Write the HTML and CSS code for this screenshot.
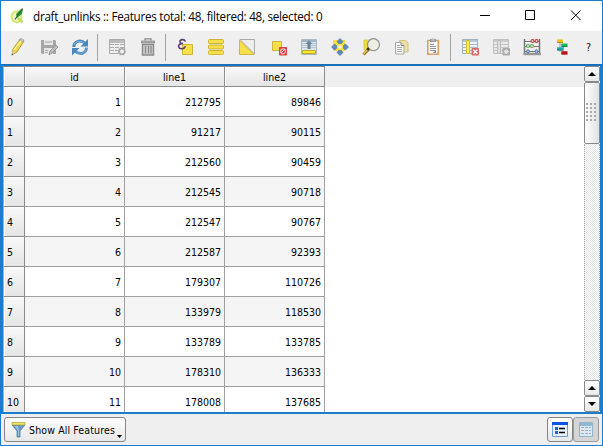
FILE: index.html
```html
<!DOCTYPE html>
<html lang="en">
<head>
<meta charset="utf-8">
<title>draft_unlinks :: Features total: 48, filtered: 48, selected: 0</title>
<link rel="stylesheet" href="styles.css">
</head>
<body>
<div class="window">
  <header class="titlebar">
    <svg class="logo" width="16" height="16" viewBox="0 0 16 16"><ellipse cx="6.500" cy="8.800" rx="5" ry="5.500" fill="#f0f5c4" stroke="#d3e578" stroke-width="2"/><path d="m8 10 4.500 4.500" stroke="#c3dc55" stroke-width="2.500"/><path d="m11 1-5 5 1 4 5-4 1-5z" fill="#3c9a3c"/><path d="m5 11.500 7.500-11" stroke="#1f6a35" stroke-width="1.200"/></svg>
    <h1 class="title">draft_unlinks :: Features total: 48, filtered: 48, selected: 0</h1>
    <svg class="controls" width="104" height="11" viewBox="0 0 104 11"><path d="M0 5.500h10M45.500.5h9v9h-9zM91 .5l9.500 9.500M100.500.5 91 10" fill="none" stroke="#000"/></svg>
  </header>

  <nav class="toolbar">
    <span class="tool"><svg viewBox="0 0 19 19"><path d="m3 17 1-6L11 1l4 2-7 11z" fill="#ead34e" stroke="#a88e2c" stroke-width=".8"/><path d="m10 2 4 2 1-2-3-1.500z" fill="#c7c7c7" stroke="#888" stroke-width=".5"/><path d="m5 12 7-9" stroke="#fff48e" stroke-width="1.300"/><path d="m3.300 13 2.500 1.500L3 17.500z" fill="#e6c9a0"/><path d="m3 15.500 1 .8-1.300 1.400z" fill="#333"/></svg></span>
    <span class="tool"><svg viewBox="0 0 19 19"><path d="M1 2h14l1 1v13H2l-1-1z" fill="#a6a6a6"/><path d="M4 2h9v5H4zM4 10h9v6H4z" fill="#e6e6e6"/><path d="M5 4h7M5 12.500h3M5 14.500h3" stroke="#aaa"/><path d="m9 17 1-4 6-6 2 2-6 6z" fill="#bebebe" stroke="#8c8c8c" stroke-width=".8"/></svg></span>
    <span class="tool"><svg viewBox="0 0 19 19"><path d="M2.800 9C3 3 10 1 14 5.500" fill="none" stroke="#4a87bd" stroke-width="3"/><path d="M17 1v7.500h-7.500z" fill="#4a87bd"/><path d="M15.500 9.500c0 6-7 8-11.200 3.600" fill="none" stroke="#6299cb" stroke-width="3"/><path d="M1 17.500V10h7.500z" fill="#4a87bd"/><path d="M3 7C4 3.500 9 2 13 5" fill="none" stroke="#92bce0" stroke-width=".8"/></svg></span>
    <i class="sep"></i>
    <span class="tool"><svg viewBox="0 0 19 19"><path d="M1.500 1.500h15v14h-15z" fill="#eee" stroke="#aaa"/><path d="M2 2h14v3H2z" fill="#bbb"/><path d="M2 6.500h4M7 6.500h4M12 6.500h4M2 9.500h4M7 9.500h4M12 9.500h4M2 12.500h4M7 12.500h4" stroke="#aaa"/><path d="m14 8.500 1.200 2 2.300-.3-.5 2.300 1.500 1.500-2 1.200-.2 2.300-2.300-.7-2.300.7-.2-2.300-2-1.200 1.500-1.500-.5-2.300 2.300.3z" fill="#a8a8a8"/><circle cx="14" cy="13.500" r="2" fill="#eee"/></svg></span>
    <span class="tool"><svg viewBox="0 0 19 19"><path d="M6 2.500V.8h6v1.700" fill="none" stroke="#8b8b8b" stroke-width="1.300"/><path d="M2 2.500h14v3H2z" fill="#a0a0a0"/><path d="M3.500 6.500h11V17h-11z" fill="#ccc" stroke="#8b8b8b" stroke-width="1.400"/><path d="M6.500 8v7.500M9.500 8v7.500M12 8v7.500" stroke="#888" stroke-width="1.200"/></svg></span>
    <i class="sep"></i>
    <span class="tool"><svg viewBox="0 0 19 19"><path d="M6.500 6.500h10v10h-10z" fill="#f7df48" stroke="#cfb639"/><path d="M9.500 3.500C8 .5 3.500 1.300 4 4c.2 1.500 2 1.700 3 1.500C4 5.500 2 7 2.700 9c.8 2.500 5.500 2.500 6.800-.7" fill="none" stroke="#5c3d72" stroke-width="1.600"/></svg></span>
    <span class="tool"><svg viewBox="0 0 19 19"><g fill="#f7df48" stroke="#cdb43b"><rect x="1.500" y="1.500" width="15" height="4" rx="1"/><rect x="1.500" y="7" width="15" height="4" rx="1"/><rect x="1.500" y="12.500" width="15" height="4" rx="1"/></g></svg></span>
    <span class="tool"><svg viewBox="0 0 19 19"><path d="M2 1.500h14.500V16z" fill="#eee" stroke="#aaa"/><path d="M1.500 2v14.500H16z" fill="#f7df48" stroke="#d1b842"/></svg></span>
    <span class="tool"><svg viewBox="0 0 19 19"><path d="M3.500 3.500h9v9h-9z" fill="#f7df48" stroke="#cdb43b"/><rect x="10" y="9" width="8" height="8.500" rx="1" fill="#d94040"/><circle cx="14" cy="13.300" r="2.500" fill="none" stroke="#f3b3b3" stroke-width="1.200"/><path d="m12 15 4-4" stroke="#fff"/></svg></span>
    <span class="tool"><svg viewBox="0 0 19 19"><path d="M1.500 1.500h15v15h-15z" fill="#dde6ec" stroke="#abb9c3"/><path d="M2 2h14v2H2z" fill="#9eb5c6"/><path d="M2 5.500h14M2 7.500h14M2 9.500h14" stroke="#b6c5d0"/><path d="m9 2.500 3.500 3.500h-2v5h-3V6h-2z" fill="#6b8499"/><path d="M2.500 12.500h13v3h-13z" fill="#ffe92e" stroke="#bba82b"/></svg></span>
    <span class="tool"><svg viewBox="0 0 19 19"><path d="M2 2h12v11H2z" fill="#f5e13c"/><g fill="#5e88bf" stroke="#4770a4" stroke-width=".6"><path d="m9 .5 3 3-1.500 2h-3L6 3.500zM9 17.500l3-3-1.500-2h-3l-1.500 2zM.5 9l3-3 2 1.500v3l-2 1.500zM17.500 9l-3-3-2 1.500v3l2 1.500z"/></g><circle cx="9" cy="9" r="1.800" fill="#eef"/></svg></span>
    <span class="tool"><svg viewBox="0 0 19 19"><path d="M2 2h9v10H2z" fill="#f2dc3a" stroke="#d6c23d" stroke-width=".7"/><path d="m7 11-5.500 5.500" stroke="#9a762a" stroke-width="3"/><path d="M6 11.500 1.500 16" stroke="#e7c157" stroke-width="1.300"/><circle cx="11.500" cy="6.700" r="6" fill="#edeee4" stroke="#929292" stroke-width="1.200"/><path d="M6 9.500v3M4.500 11h3" stroke="#111"/></svg></span>
    <span class="tool"><svg viewBox="0 0 19 19"><path d="M6.500 2.500h6l2.500 2V14H6.500z" fill="#eee19a" stroke="#cfc487"/><path d="M2.500 4.500h5.500l3 3v8.500H2.500z" fill="#fafafa" stroke="#aaa"/><path d="M4 7.500h3M4 9.500h5M4 11.500h5M4 13.500h5" stroke="#aaa"/><path d="M8 4.500v3h3" fill="none" stroke="#888"/></svg></span>
    <span class="tool"><svg viewBox="0 0 19 19"><path d="M3.800 2.500h10.500v13.800H3.800z" fill="#fafafa" stroke="#d4a266" stroke-width="1.600"/><path d="M6 1h6v3H6z" fill="#999"/><path d="M7.500.5h3V3h-3z" fill="#bbb"/><path d="M6 6.500h4M6 8.500h6M6 10.500h6M6 12.500h6" stroke="#999"/><path d="m9 15 3-3v3z" fill="#888"/></svg></span>
    <i class="sep"></i>
    <span class="tool"><svg viewBox="0 0 19 19"><path d="M1.500 1.500h15v14h-15z" fill="#edf2f5" stroke="#9fb1bf"/><path d="M2 2h14v2H2z" fill="#b7c7d3"/><path d="M2 6.500h14M2 9.500h14M2 12.500h10" stroke="#a8b8c4"/><path d="M5.500 2.500h3v13h-3z" fill="#fff04a" stroke="#d3bd2f"/><rect x="10.500" y="10" width="7.500" height="7.500" rx="1" fill="#dc6666"/><path d="m12.300 11.800 4 4m0-4-4 4" stroke="#fff" stroke-width="1.400"/></svg></span>
    <span class="tool"><svg viewBox="0 0 19 19"><path d="M1.500 1.500h15v14h-15z" fill="#e9e9e9" stroke="#c0c0c0"/><path d="M2 2h14v2H2z" fill="#ccc"/><path d="M2 6.500h14M2 9.500h14M2 12.500h9" stroke="#c6c6c6"/><path d="M5.500 2.500h3v13h-3z" fill="#ddd" stroke="#bbb"/><rect x="10.500" y="10" width="7.500" height="7.500" rx="1" fill="#aaa"/><path d="M14.200 11.200v5M11.800 13.700h5M12.500 12l3.500 3.500m0-3.500-3.500 3.500" stroke="#eee"/></svg></span>
    <span class="tool"><svg viewBox="0 0 19 19"><path d="M1.500 1v16M16.500 1v16" stroke="#777" stroke-width="1.500"/><path d="M.5 16h17.500" stroke="#999" stroke-width="2.500"/><path d="M2 3.500h14M2 8.500h14M2 13.500h14" stroke="#777"/><g fill="#f2dada" stroke="#c53a42" stroke-width="1.200"><circle cx="9.500" cy="3" r="1.500"/><circle cx="13.500" cy="3" r="1.500"/></g><g fill="#e1f1dd" stroke="#63a95e" stroke-width="1.200"><circle cx="5" cy="8" r="1.500"/><circle cx="9" cy="8" r="1.500"/></g><g fill="#a7c4e2" stroke="#4a76a5"><circle cx="5" cy="13.300" r="1.500"/><circle cx="13.500" cy="13.300" r="1.500"/></g></svg></span>
    <span class="tool"><svg viewBox="0 0 19 19"><path d="M6 4v10M9.500 8v6" stroke="#888" stroke-width=".8"/><path d="M3 1.500h6v3.300H3z" fill="#f0c400"/><path d="M7.300 5.600h6.200v3.300H7.300z" fill="#0fb25d"/><path d="M3 9.300h6v3.200H3z" fill="#1aa5b3"/><path d="M7.300 13.200h6.200v3.300H7.300z" fill="#c41216"/><path d="M3 4.500h6M7.300 8.600h6.200M3 12.200h6M7.300 16.200h6.200" stroke="#000" stroke-opacity=".35" stroke-width=".8"/></svg></span>
    <span class="help">?</span>
  </nav>

  <main class="view">
    <table class="grid">
      <thead><tr><th class="corner"></th><th>id</th><th>line1</th><th>line2</th></tr></thead>
      <tbody>
        <tr><th>0</th><td>1</td><td>212795</td><td>89846</td></tr>
        <tr><th>1</th><td>2</td><td>91217</td><td>90115</td></tr>
        <tr><th>2</th><td>3</td><td>212560</td><td>90459</td></tr>
        <tr><th>3</th><td>4</td><td>212545</td><td>90718</td></tr>
        <tr><th>4</th><td>5</td><td>212547</td><td>90767</td></tr>
        <tr><th>5</th><td>6</td><td>212587</td><td>92393</td></tr>
        <tr><th>6</th><td>7</td><td>179307</td><td>110726</td></tr>
        <tr><th>7</th><td>8</td><td>133979</td><td>118530</td></tr>
        <tr><th>8</th><td>9</td><td>133789</td><td>133785</td></tr>
        <tr><th>9</th><td>10</td><td>178310</td><td>136333</td></tr>
        <tr><th>10</th><td>11</td><td>178008</td><td>137685</td></tr>
      </tbody>
    </table>
    <div class="rest"></div>
    <div class="scroll">
      <div class="arrow"><svg width="8" height="4" viewBox="0 0 8 4"><path d="M4 0 8 4H0z"/></svg></div>
      <div class="thumb"><div class="grip"></div></div>
      <div class="track"></div>
      <div class="arrow"><svg width="8" height="4" viewBox="0 0 8 4"><path d="M4 0 8 4H0z"/></svg></div>
      <div class="arrow"><svg width="8" height="4" viewBox="0 0 8 4"><path d="M4 4 8 0H0z"/></svg></div>
    </div>
  </main>

  <footer class="bottom">
    <button class="filter">
      <svg width="15" height="16" viewBox="0 0 15 16"><path d="M1 3h13L9 9v6H6V9z" fill="#6a9aca" stroke="#5780a9" stroke-width=".8"/><path d="M4 4h3l1 5v5H7V9z" fill="#9bc0e2"/><path d="M1 .5h13V3H1z" fill="#f4e653" stroke="#aaa04d" stroke-width=".7"/></svg>
      <span>Show All Features</span>
      <svg class="caret" width="5" height="3" viewBox="0 0 5 3"><path d="M0 0h5L2.500 3z"/></svg>
    </button>
    <div class="modes">
      <button class="mode"><svg width="16" height="15" viewBox="0 0 16 15"><path d="M.5.5h15v14H.5z" fill="#e9f2ff" stroke="#6f9cdf"/><path d="M0 0h16v3H0z" fill="#0b54e0"/><path d="M3 5h3v3H3zM3 9h3v3H3z" fill="#2861c9"/><path d="M7 6.500h6M7 10.500h6" stroke="#000" stroke-width="1.300"/></svg></button>
      <button class="mode on"><svg width="14" height="15" viewBox="0 0 14 15"><path d="M.5.5h13v14H.5z" fill="#dce7ee" stroke="#91b3cc"/><path d="M1 1h12v3H1z" fill="#91b7d5"/><path d="M2 5.500h3M6 5.500h3M10 5.500h2M2 8.500h3M6 8.500h3M10 8.500h2M2 11.500h3M6 11.500h3M10 11.500h2" stroke="#94b5cd"/></svg></button>
    </div>
  </footer>
</div>
</body>
</html>
```
FILE: styles.css
```css
* { box-sizing: border-box; }
body {
  margin: 0;
  font: 10.5px "DejaVu Sans Condensed", "DejaVu Sans", sans-serif;
  font-stretch: condensed;
  color: #000;
  overflow: hidden;
}
.window {
  width: 603px;
  height: 446px;
  border: 1px solid #1a7bcf;
  background: #efefef;
  display: flex;
  flex-direction: column;
}
.titlebar {
  height: 30px;
  flex: none;
  background: #fff;
  display: flex;
  align-items: center;
  padding: 0 18px 0 9px;
}
.logo { margin-top: -1px; }
.title {
  margin: 0 auto 0 7px;
  font: 11.7px "Open Sans", "Noto Sans", sans-serif;
  letter-spacing: -0.27px;
  white-space: nowrap;
}
.controls { margin-top: -1px; }

.toolbar {
  height: 33px;
  flex: none;
  display: flex;
  padding-left: 2px;
}
.tool {
  width: 31px;
  display: flex;
  align-items: center;
  justify-content: center;
}
.tool svg { width: 19px; height: 19px; }
.sep {
  width: 1px;
  height: 27px;
  margin: 3px 4px 0 1px;
  background: #a2a2a2;
}
.help { margin: 9px 0 0 7px; line-height: 14px; color: #111; }

.view {
  height: 350px;
  flex: none;
  border: 2px solid #1a7bcf;
  border-top-color: #1470bd;
  background: #fff;
  display: flex;
  overflow: hidden;
}
.grid {
  width: 322px;
  height: 351px;
  flex: none;
  table-layout: fixed;
  border-collapse: separate;
  border-spacing: 0;
}
.grid th, .grid td {
  padding: 0;
  height: 30px;
  border: solid #a0a0a0;
  border-width: 0 1px 1px 0;
  font-weight: normal;
  line-height: 14px;
}
.grid th {
  background: linear-gradient(#f8f8f8, #e5e5e5);
  border-color: #8c8c8c;
  box-shadow: inset 1px 1px #fff;
}
.grid thead th {
  height: 21px;
  border-top: 1px solid #8c8c8c;
  width: 100px;
}
.grid thead th.corner { width: 22px; }
.grid tbody th { text-align: left; padding-left: 3px; border-left: 1px solid #b0b0b0; }
.grid .corner { border-left: 1px solid #b0b0b0; }
.grid td { text-align: right; padding-right: 3px; }
.grid tbody tr:nth-child(even) td { background: #f5f5f5; }
.rest { flex: 1; height: 21px; background: #efefef; }

.scroll { width: 16px; display: flex; flex-direction: column; }
.arrow, .thumb {
  flex: none;
  border: 1px solid #898989;
  border-radius: 2px;
  background: linear-gradient(#fff, #e8e8e8);
  display: flex;
  align-items: center;
  justify-content: center;
}
.arrow { height: 16px; }
.thumb { height: 62px; background: linear-gradient(90deg, #fff, #e0e0e0); }
.grip {
  width: 12px;
  height: 20px;
  background: radial-gradient(circle at 1px 1px, #aaa 1px, transparent 1.4px) 0 0 / 4px 4px;
}
.track {
  flex: 1;
  border: dotted #aaa;
  border-width: 0 1px;
  background: conic-gradient(#e6e6e6 25%, #fff 0 50%, #e6e6e6 0 75%, #fff 0) 0 0 / 2px 2px;
}

.bottom {
  flex: 1;
  display: flex;
  align-items: flex-start;
  justify-content: space-between;
  padding: 3px 3px 0 3px;
}
button {
  font: inherit;
  color: inherit;
  padding: 0;
  border: 1px solid #858585;
  border-radius: 3px;
  background: linear-gradient(#fdfdfd, #e8e8e8);
  display: flex;
  align-items: center;
}
.filter { width: 122px; height: 25px; padding-left: 6px; gap: 3px; white-space: nowrap; letter-spacing: 0.13px; }
.caret { margin: 13px 0 0 -1px; flex: none; }
.modes { display: flex; }
.mode { width: 26px; height: 25px; justify-content: center; }
.mode.on { background: #d5d5d5; border-color: #999; }
```
